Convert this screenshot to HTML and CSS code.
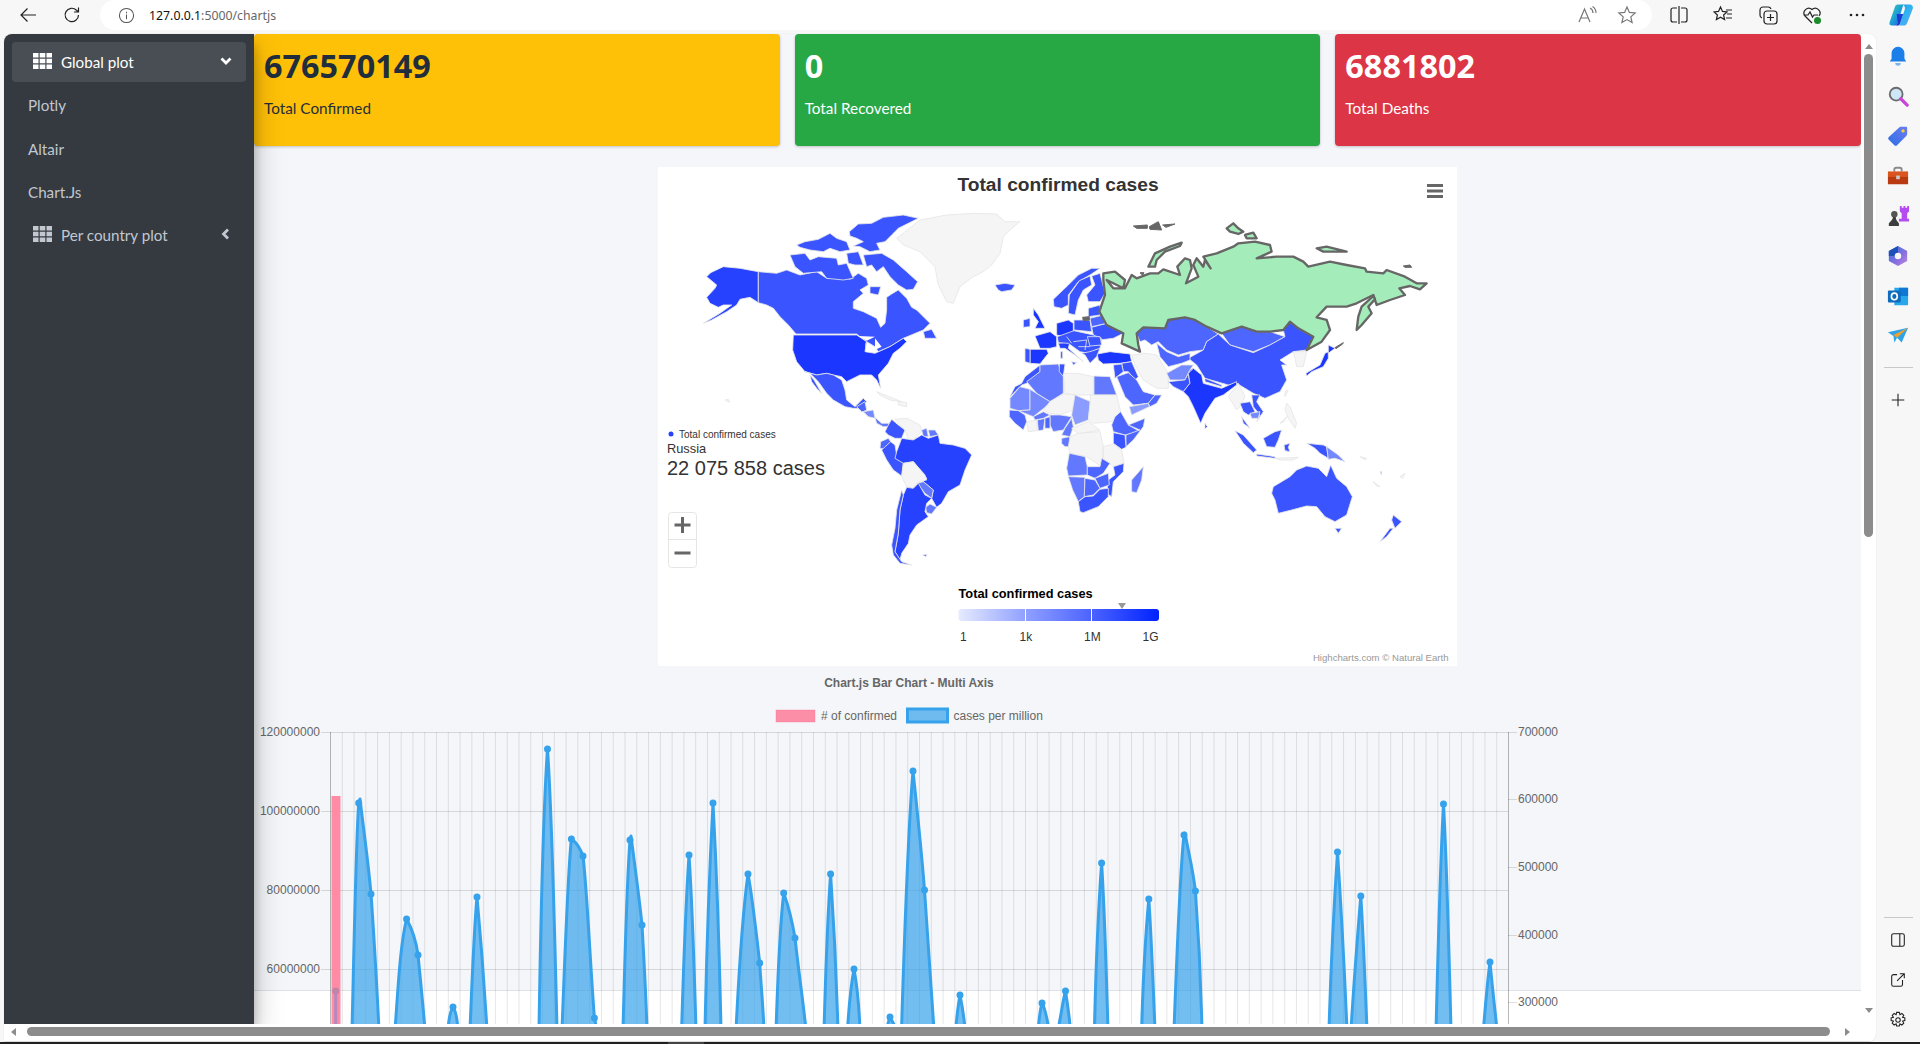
FILE: index.html
```html
<!DOCTYPE html>
<html lang="en">
<head>
  <meta charset="UTF-8" />
  <title>Chart.js - Covid dashboard</title>
  <link rel="stylesheet" href="styles.css">
</head>
<body>
  <header class="toolbar">
    <svg class="tool-icon back" viewBox="0 0 20 20"><path d="M18 10H3M9.500 3.500 3 10l6.500 6.500"/></svg>
    <svg class="tool-icon reload" viewBox="0 0 20 20"><path d="M16.500 10a6.700 6.700 0 1 1-2-4.800L16.500 7M16.500 2.500V7H12"/></svg>
    <div class="address">
      <svg class="info" viewBox="0 0 18 18"><circle cx="9" cy="9" r="7.500"/><path d="M9 8v5M9 5v1.500"/></svg>
      <span class="url"><b>127.0.0.1</b>:5000/chartjs</span>
      <svg class="tool-icon read" viewBox="0 0 20 20"><path d="M2 17 7.500 4 13 17M4 13h7M13 3c2 1 3 3 3 5M15.500 1.500c2.500 1.500 3.500 4 3.500 6.500"/></svg>
      <svg class="tool-icon star" viewBox="0 0 20 20"><path d="m10 2 2.400 5.400 5.800.6-4.400 3.900 1.300 5.700-5.100-3-5.100 3 1.300-5.700L1.800 8l5.800-.6z"/></svg>
    </div>
    <div class="toolbar-right">
      <svg class="tool-icon" viewBox="0 0 20 20"><path d="M10 1v18M8 3H4a2 2 0 0 0-2 2v10a2 2 0 0 0 2 2h4M12 3h4a2 2 0 0 1 2 2v10a2 2 0 0 1-2 2h-4"/></svg>
      <svg class="tool-icon" viewBox="0 0 20 20"><path d="m7.500 2 2 4.400 4.500.5-3.400 3.100 1 4.600-4.100-2.400L3.400 14.600l1-4.600L1 6.900l4.500-.5zM13 5h6M14 9h5M13 13h6"/></svg>
      <svg class="tool-icon" viewBox="0 0 20 20"><rect x="6" y="6" width="13" height="13" rx="3"/><path d="M12.500 9v7M9 12.500h7M4 13a3 3 0 0 1-2-3V5a3 3 0 0 1 3-3h5a3 3 0 0 1 3 2"/></svg>
      <svg class="tool-icon" viewBox="0 0 20 20"><path d="M10 18 3 11a4.800 4.800 0 0 1 7-6.500A4.800 4.800 0 0 1 17 11M1.500 10H6l2-3 2.500 5 1.500-2h4"/><circle class="health-dot" cx="15.500" cy="15.500" r="3.500"/></svg>
      <svg class="dots" viewBox="0 0 20 20"><circle cx="4" cy="10" r="1.300"/><circle cx="10" cy="10" r="1.300"/><circle cx="16" cy="10" r="1.300"/></svg>
      <svg class="copilot" viewBox="0 0 26 24">
        <defs>
          <linearGradient id="copA" x1="0" y1="0" x2="1" y2="1"><stop offset="0" stop-color="#3fd0a8"/><stop offset=".5" stop-color="#1c9fd8"/><stop offset="1" stop-color="#1a55e0"/></linearGradient>
          <linearGradient id="copB" x1="0" y1="0" x2="1" y2="1"><stop offset="0" stop-color="#1f8fe0"/><stop offset=".5" stop-color="#2fb4f0"/><stop offset="1" stop-color="#6fa0f5"/></linearGradient>
          <linearGradient id="copC" x1="0" y1="0" x2="0" y2="1"><stop offset="0" stop-color="#1c3fd6"/><stop offset="1" stop-color="#2a2fc0"/></linearGradient>
        </defs>
        <path fill="url(#copA)" d="M9 1h6L9 20c-1 2-2 3-4 3H3c-2 0-3-1.500-2.400-3.500L6 4c.600-2 1.500-3 3-3z"/>
        <path fill="url(#copC)" d="M8 11h7l-3 9c-.600 2-2 3-4 3H5c2 0 3-1 4-3z"/>
        <path fill="url(#copB)" d="M13 1h8c3 0 4.500 2 3.700 4.500L19 20c-.600 2-2 3-4 3H8c2 0 3-1 3.600-3l4.900-14c.500-3-1-5-3.500-5z"/>
      </svg>
    </div>
  </header>

  <div class="window">
    <div class="page">
      <div class="page-row">
        <div class="viewport">
          <aside class="sidebar">
            <nav class="nav">
              <a class="nav-item active">
                <svg class="th" viewBox="0 0 19 16"><path d="M0 0h5.500v4.500H0zM6.700 0h5.600v4.500H6.700zM13.500 0H19v4.500h-5.500zM0 5.700h5.500v4.600H0zM6.700 5.700h5.600v4.600H6.700zM13.500 5.700H19v4.600h-5.500zM0 11.500h5.500V16H0zM6.700 11.500h5.600V16H6.700zM13.500 11.500H19V16h-5.500z"/></svg>
                <span>Global plot</span>
                <svg class="chev" viewBox="0 0 12 12"><path d="m1.500 3.500 4.500 4.500 4.500-4.500"/></svg>
              </a>
              <a class="nav-item sub">Plotly</a>
              <a class="nav-item sub">Altair</a>
              <a class="nav-item sub">Chart.Js</a>
              <a class="nav-item">
                <svg class="th" viewBox="0 0 19 16"><path d="M0 0h5.500v4.500H0zM6.700 0h5.600v4.500H6.700zM13.500 0H19v4.500h-5.500zM0 5.700h5.500v4.600H0zM6.700 5.700h5.600v4.600H6.700zM13.500 5.700H19v4.600h-5.500zM0 11.500h5.500V16H0zM6.700 11.500h5.600V16H6.700zM13.500 11.500H19V16h-5.500z"/></svg>
                <span>Per country plot</span>
                <svg class="chev up" viewBox="0 0 12 12"><path d="M8 1.500 3.500 6 8 10.500"/></svg>
              </a>
            </nav>
          </aside>

          <main class="content">
            <section class="cards">
              <div class="card yellow"><h3>676570149</h3><p>Total Confirmed</p></div>
              <div class="card green"><h3>0</h3><p>Total Recovered</p></div>
              <div class="card red"><h3>6881802</h3><p>Total Deaths</p></div>
            </section>

            <section class="map-card">
              <svg class="map" viewBox="658 167 799 499">
                <text class="map-title" x="1058" y="190.500">Total confirmed cases</text>
                <path class="burger" d="M1427 185.500h16M1427 191h16M1427 196.500h16"/>

                <!-- north america -->
                <g class="tile" transform="translate(690 210) scale(.3333)">
                  <polygon class="c2" points="62,188 100,170 150,175 205,185 205,278 180,262 150,268 140,285 110,305 65,330 40,340 90,310 125,285 100,285 85,292 60,280 50,262 75,235 80,225 50,200"/>
                  <polygon class="c3" points="205,185 260,190 290,180 330,195 380,185 410,205 450,195 480,208 505,190 530,205 535,225 510,240 520,250 490,275 490,295 520,305 560,325 572,352 585,340 590,300 590,262 605,252 625,240 650,265 665,292 680,300 720,340 700,360 640,385 600,410 565,425 555,410 530,395 500,372 318,372 295,345 270,320 250,295 230,285 205,278"/>
                  <polygon class="c3" points="520,135 575,130 610,150 650,185 683,215 670,238 650,240 625,225 600,200 580,170 560,185 545,165 530,170"/>
                  <polygon class="c3" points="478,65 505,42 545,40 580,22 640,15 685,25 655,40 625,55 605,75 585,95 560,100 570,120 540,125 510,110 490,108 520,95 500,85 480,78"/>
                  <polygon class="c3" points="300,135 345,130 360,150 385,140 440,145 445,165 470,160 490,205 460,210 410,205 395,185 340,190 315,170"/>
                  <polygon class="c3" points="320,105 345,95 385,88 420,70 440,85 470,95 480,120 450,125 420,115 400,125 360,120 330,112"/>
                  <polygon class="c3" points="470,130 505,125 520,165 495,165 475,160"/>
                  <polygon class="c3" points="540,230 572,230 565,255 540,250"/>
                  <polygon class="c3" points="700,365 725,358 740,385 705,385"/>
                  <polygon class="c1" points="310,375 500,375 530,395 525,425 555,430 600,410 640,385 650,395 630,415 610,430 595,460 565,495 572,535 560,510 545,495 510,495 470,515 455,500 430,495 410,490 380,495 345,485 320,455 308,420"/>
                  <polygon class="lake" points="505,378 555,380 530,392"/>
                  <polygon class="lake" points="526,395 536,425 528,425"/>
                  <polygon class="lake" points="555,385 575,410 555,420"/>
                  <polygon class="c3" points="345,485 380,495 410,490 430,495 455,510 465,540 470,570 495,590 520,565 530,575 510,595 490,595 465,590 430,570 410,550 385,515 360,490"/>
                  <polygon class="c3" points="360,495 372,510 395,550 380,535 365,515"/>
                  <polygon class="c4" points="500,590 525,575 530,600 520,605 515,605"/>
                  <polygon class="c6" points="520,605 550,600 555,625 535,620"/>
                  <polygon class="c5" points="555,622 575,640 595,640 600,650 580,650 560,640"/>
                  <polygon class="grey" points="560,545 610,565 635,575 600,570 570,555"/>
                  <polygon class="grey" points="625,575 650,578 650,590 625,585"/>
                  <polygon class="grey" points="620,85 690,30 770,15 850,10 920,12 945,35 990,35 960,60 940,80 930,130 905,165 880,185 850,200 810,230 790,280 770,275 745,225 735,170 690,125 640,105"/>
                  <polygon class="c3" points="915,225 945,220 975,225 965,240 935,245 925,240"/>
                  <polygon class="grey" points="105,570 115,568 120,577 110,573"/>
                </g>

                <!-- south america -->
                <g class="tile" transform="translate(860 400) scale(.3333)">
                  <polygon class="c3" points="95,58 115,75 135,90 125,115 105,115 85,105 75,95 85,75"/>
                  <polygon class="grey" points="105,58 140,55 180,75 185,95 160,120 145,118 135,90"/>
                  <polygon class="c5" points="185,90 200,85 205,110 190,110"/>
                  <polygon class="c5" points="205,90 225,90 235,105 210,110"/>
                  <polygon class="c4" points="62,125 85,115 92,125 75,148 60,145"/>
                  <polygon class="c3" points="65,150 92,125 105,135 110,165 130,190 125,228 100,210 80,180"/>
                  <polygon class="c2" points="125,115 160,120 185,105 205,115 235,105 240,130 280,135 315,145 335,165 315,210 300,255 265,275 245,310 230,322 215,295 220,270 190,245 200,235 160,185 130,190 105,175 110,155"/>
                  <polygon class="grey" points="130,190 160,185 195,225 200,240 175,245 160,265 140,260 125,230"/>
                  <polygon class="c5" points="172,250 190,245 220,270 215,295 195,280"/>
                  <polygon class="c5" points="197,322 210,312 230,322 215,342 200,338"/>
                  <polygon class="c2" points="140,262 160,265 175,250 195,285 215,295 200,310 195,335 205,350 170,375 150,405 145,430 125,460 120,480 105,455 115,400 120,330 130,285"/>
                  <polygon class="c3" points="125,270 130,285 120,330 115,400 105,455 125,485 155,495 120,490 100,465 95,435 105,385 110,330"/>
                  <polygon class="c3" points="188,465 200,463 198,470"/>
                </g>

                <!-- europe, africa, middle east -->
                <g class="tile" transform="translate(1000 240) scale(.3333)">
                  <polygon class="c3" points="160,178 205,135 235,105 275,85 300,85 270,105 235,125 205,165 205,195 185,205 162,200"/>
                  <polygon class="c3" points="208,165 238,122 270,108 275,135 250,150 235,180 225,225 205,220"/>
                  <polygon class="c3" points="275,108 300,100 315,160 300,185 265,185 260,165 285,135"/>
                  <polygon class="c1" points="170,250 205,240 220,250 220,285 195,290 170,285"/>
                  <polygon class="c1" points="105,288 150,275 170,290 170,320 150,325 120,325"/>
                  <polygon class="c1" points="90,328 140,328 145,340 120,372 90,370"/>
                  <polygon class="c3" points="75,325 90,328 90,370 75,365"/>
                  <polygon class="c1" points="100,205 115,225 135,265 105,265 115,245 100,225"/>
                  <polygon class="c3" points="70,240 90,235 90,260 70,262"/>
                  <polygon class="c2" points="175,310 210,305 205,325 250,365 225,345 195,325 180,325"/>
                  <polygon class="c3" points="215,365 230,368 220,375"/>
                  <polygon class="c3" points="182,335 188,335 188,355 182,355"/>
                  <polygon class="c3" points="222,240 270,240 275,275 222,270"/>
                  <polygon class="c3" points="275,262 320,250 370,280 340,295 300,300 280,285"/>
                  <polygon class="c4" points="270,235 310,225 320,250 275,260"/>
                  <polygon class="c3" points="265,205 300,195 300,225 265,230"/>
                  <polygon class="russia-bit" points="248,232 268,230 268,240 250,242"/>
                  <polygon class="c3" points="172,290 222,272 280,285 305,295 300,325 265,340 240,335 205,310 175,308"/>
                  <polygon class="c3" points="262,290 300,290 305,315 270,318"/>
                  <polygon class="c3" points="245,340 270,335 300,325 290,350 270,370 255,345"/>
                  <polyline class="border" points="200,290 215,310"/>
                  <polyline class="border" points="220,305 260,300 255,330"/>
                  <polyline class="border" points="235,320 270,320"/>
                  <polygon class="c1" points="292,342 330,335 390,342 395,365 360,370 310,372 295,360"/>
                  <polygon class="c3" points="365,370 395,365 415,410 405,420 385,395 370,395"/>
                  <polygon class="c3" points="340,375 365,372 370,395 345,415"/>
                  <polygon class="grey" points="395,345 440,340 470,345 505,400 505,445 470,445 430,420 405,375"/>
                  <polygon class="c4" points="350,410 385,398 410,420 430,455 465,465 445,490 400,495 375,470"/>
                  <polygon class="c7" points="388,500 445,490 448,500 395,525"/>
                  <polygon class="c4" points="445,490 465,465 485,465 470,490 450,500"/>
                  <!-- africa -->
                  <polygon class="c3" points="75,410 120,375 120,395 80,430 65,435 50,450 30,470 45,440 65,430"/>
                  <polygon class="c5" points="120,375 175,372 190,410 190,460 150,485 110,460 80,425 120,395"/>
                  <polygon class="c3" points="178,372 195,372 190,410 178,395"/>
                  <polygon class="grey" points="190,400 235,400 280,410 280,465 225,465 195,460"/>
                  <polygon class="c5" points="282,408 330,410 350,465 282,465"/>
                  <polygon class="c6" points="30,475 60,440 90,448 90,510 55,512 30,505"/>
                  <polygon class="c6" points="90,448 150,485 150,490 125,510 100,530 55,512 90,510"/>
                  <polygon class="grey" points="150,485 190,462 225,465 220,510 180,525 150,520 130,510"/>
                  <polygon class="c7" points="225,465 272,485 265,540 225,555 215,525"/>
                  <polygon class="grey" points="272,465 350,465 362,515 335,545 280,550 265,540"/>
                  <polygon class="c5" points="150,525 180,525 215,530 190,570 160,575 150,555"/>
                  <polygon class="c5" points="195,565 215,535 220,560 210,590 185,585"/>
                  <polygon class="c5" points="112,540 135,535 130,570 115,572"/>
                  <polygon class="c4" points="135,535 150,530 150,565 135,565"/>
                  <polygon class="grey" points="80,545 110,540 112,572 85,575"/>
                  <polygon class="c4" points="28,510 55,512 75,525 80,545 70,570 45,550 28,530"/>
                  <polygon class="c5" points="100,530 130,515 150,525 130,535 105,540"/>
                  <polygon class="c5" points="185,595 210,590 210,620 195,620 185,610"/>
                  <polygon class="grey" points="215,565 265,545 300,570 235,582"/>
                  <polygon class="grey" points="210,590 235,580 300,575 310,620 305,680 260,650 210,640 205,620"/>
                  <polygon class="c4" points="345,530 362,515 385,555 420,575 375,585 340,575 335,555"/>
                  <polygon class="c4" points="385,555 435,535 430,560 400,600 378,620 378,585 420,570"/>
                  <polygon class="c3" points="340,578 375,585 378,622 365,628 340,610"/>
                  <polygon class="grey" points="310,620 340,612 365,630 372,670 340,680 310,655"/>
                  <polygon class="c5" points="208,640 255,650 262,680 262,705 205,708 200,685"/>
                  <polygon class="c4" points="262,680 300,680 305,655 330,670 310,700 285,715 262,705"/>
                  <polygon class="c3" points="340,680 372,670 370,695 340,725 335,770 320,760 325,720 345,705"/>
                  <polygon class="c5" points="205,710 255,712 253,770 235,785 218,750"/>
                  <polygon class="c4" points="255,715 285,720 300,745 280,765 253,770"/>
                  <polygon class="c4" points="285,715 325,700 328,735 300,745"/>
                  <polygon class="c3" points="235,785 255,770 280,768 300,748 325,745 325,770 295,800 250,818 240,815"/>
                  <polygon class="c5" points="430,680 425,720 410,758 395,755 395,720"/>
                </g>

                <!-- asia -->
                <g class="tile" transform="translate(1090 210) scale(.3333)">
                  <polygon class="c4" points="140,370 160,352 225,355 235,330 285,322 315,330 350,350 385,372 350,395 340,420 300,425 265,435 230,420 205,395 195,400 185,405 165,390 150,395"/>
                  <polygon class="c4" points="395,370 455,350 500,365 540,365 585,380 540,405 490,425 420,405"/>
                  <polygon class="c3" points="385,372 420,405 490,428 540,405 585,380 580,360 600,335 625,355 670,380 650,420 610,425 570,450 590,465 575,465 590,510 570,545 525,565 490,550 440,520 415,525 345,505 320,465 295,445 340,420 350,395"/>
                  <polygon class="c4" points="200,400 230,425 265,440 300,430 300,450 275,460 235,470 210,440"/>
                  <polygon class="c6" points="230,490 275,465 310,465 300,480 285,510 240,510"/>
                  <polygon class="c3" points="235,515 285,510 300,480 310,475 295,495 300,520 280,545 250,530"/>
                  <polygon class="c1" points="310,475 335,495 340,520 395,535 440,515 440,525 400,555 375,565 345,610 332,640 310,590 295,560 280,545 300,520 295,490"/>
                  <polygon class="c3" points="345,505 395,525 395,530 345,515"/>
                  <polygon class="c2" points="345,640 352,650 345,657"/>
                  <polygon class="grey" points="610,425 650,425 640,470 620,470 615,445"/>
                  <polygon class="c1" points="648,490 690,465 705,430 715,425 715,445 700,470 665,485 650,498"/>
                  <polygon class="c1" points="715,405 735,415 715,430"/>
                  <polygon class="ru" points="40,190 75,185 105,210 100,235 70,220 50,210 70,235 105,235 125,195 140,205 180,190 205,190 220,178 270,195 262,170 285,145 300,150 305,175 288,220 325,200 310,165 320,145 340,170 345,150 362,175 340,140 380,130 430,110 445,100 495,95 540,105 545,125 500,145 560,140 610,140 640,155 655,170 720,155 770,165 825,175 830,185 880,190 890,180 945,200 980,220 1010,220 990,238 960,228 928,235 945,255 900,270 860,285 850,255 800,280 770,290 710,290 680,322 710,330 720,360 695,395 650,420 670,380 625,355 600,335 580,360 540,365 500,365 455,350 395,370 350,350 315,330 285,322 235,330 225,355 160,352 140,370 145,405 150,425 95,400 100,370 50,345 28,305 45,255 40,210"/>
                  <polygon class="ru" points="800,360 805,320 815,290 850,258 855,268 835,290 845,310 815,345"/>
                  <polygon class="ru" points="175,170 195,130 240,110 275,98 270,108 225,125 200,150 195,170"/>
                  <polygon class="ru" points="410,55 430,40 445,55 460,65 445,72 420,65"/>
                  <polygon class="ru" points="465,75 490,68 500,85 470,85"/>
                  <polygon class="ru" points="680,115 710,110 770,125 730,125 700,125"/>
                  <polygon class="ru-dark" points="130,48 172,45 172,55 140,55"/>
                  <polygon class="ru-dark" points="178,50 205,35 215,60 180,58"/>
                  <polygon class="ru-dark" points="218,45 255,42 228,52"/>
                  <polygon class="ru-dark" points="940,168 960,165 965,172 945,172"/>
                  <polygon class="ru-dark" points="150,188 162,188 158,196"/>
                  <polygon class="ru-dark" points="735,413 760,398 758,402 738,416"/>
                </g>

                <!-- south east asia, oceania -->
                <g class="tile" transform="translate(1160 360) scale(.3333)">
                  <polygon class="grey" points="205,110 235,70 255,110 240,140 230,150 215,125"/>
                  <polygon class="c3" points="240,130 270,125 285,155 265,165 250,155"/>
                  <polygon class="c3" points="245,170 270,205 250,190"/>
                  <polygon class="c3" points="275,105 300,105 290,125 310,155 290,185 300,165 280,140"/>
                  <polygon class="c6" points="270,160 300,155 295,175 275,175"/>
                  <polygon class="grey" points="375,95 385,90 375,110"/>
                  <polygon class="grey" points="380,130 390,140 410,190 405,205 385,175 375,150"/>
                  <polygon class="grey" points="360,190 380,170 372,185"/>
                  <polygon class="c3" points="225,212 250,225 290,270 280,278 250,250"/>
                  <polygon class="c3" points="290,282 345,290 345,295 290,288"/>
                  <polygon class="grey" points="345,295 415,292 400,300 360,300"/>
                  <polygon class="c3" points="310,235 345,215 365,210 355,240 345,262 320,260"/>
                  <polygon class="c3" points="372,255 390,250 385,262 390,275 375,272"/>
                  <polygon class="c3" points="440,250 490,255 500,260 505,295 480,280 465,265"/>
                  <polygon class="c6" points="500,260 535,285 555,305 525,295 505,298"/>
                  <polygon class="c3" points="340,380 390,350 410,330 440,318 475,325 500,350 512,315 530,355 560,380 577,410 560,465 525,485 495,470 470,440 440,438 395,450 355,460 345,420 335,400"/>
                  <polygon class="c3" points="525,505 545,505 535,520"/>
                  <polygon class="c3" points="700,465 725,485 705,505 695,480"/>
                  <polygon class="c3" points="700,505 680,530 660,545 690,505"/>
                  <polygon class="grey" points="600,290 620,295 615,300"/>
                  <polygon class="grey" points="640,365 660,380 650,378"/>
                  <polygon class="grey" points="720,350 735,340 728,355"/>
                  <polygon class="c4" points="660,335 665,335 665,345"/>
                </g>

                <circle class="tip-dot" cx="671" cy="434" r="2.500"/>
                <text class="tip-series" x="679" y="437.500">Total confirmed cases</text>
                <text class="tip-name" x="667" y="453">Russia</text>
                <text class="tip-value" x="667" y="475">22 075 858 cases</text>

                <rect class="zoom-box" x="668.500" y="512.500" width="28" height="55" rx="3"/>
                <path class="zoom-line" d="M668.500 539.500h28"/>
                <path class="zoom-sign" d="M674.500 525h16M682.500 517v16M674.500 553h16"/>

                <text class="legend-title" x="958.500" y="597.500">Total confirmed cases</text>
                <path class="legend-marker" d="m1118 603 h8 l-4 6z"/>
                <defs>
                  <linearGradient id="scale"><stop offset="0" stop-color="#e6ebff"/><stop offset=".34" stop-color="#8f9fff"/><stop offset=".67" stop-color="#4a62ff"/><stop offset="1" stop-color="#0022ff"/></linearGradient>
                </defs>
                <rect x="958.500" y="609" width="200.500" height="12" rx="3" fill="url(#scale)"/>
                <path class="legend-tick" d="M1025.500 609v12M1091.500 609v12"/>
                <text class="legend-label" x="960" y="641">1</text>
                <text class="legend-label" x="1019.500" y="641">1k</text>
                <text class="legend-label" x="1084" y="641">1M</text>
                <text class="legend-label" x="1142.500" y="641">1G</text>
                <text class="credits" x="1448.500" y="661">Highcharts.com © Natural Earth</text>
              </svg>
            </section>

            <svg class="bar-chart" viewBox="254 666 1606 358">
              <text class="chart-title" x="909" y="687">Chart.js Bar Chart - Multi Axis</text>
              <rect class="key-pink" x="776" y="710" width="39" height="12"/>
              <text class="chart-label" x="821" y="720">&#35; of confirmed</text>
              <rect class="key-blue" x="907.500" y="709" width="40" height="13"/>
              <text class="chart-label" x="953.500" y="720">cases per million</text>

              <path class="grid" d="M321 732.500H1508M321 811.500H1508M321 890.500H1508M321 969.500H1508M1508 732.500h9M1508 799.500h9M1508 867.500h9M1508 935.500h9M1508 1002.500h9"/>
              <line class="grid-v" x1="341.780" y1="878" x2="1508" y2="878"/>
              <path class="axis" d="M330.500 732v292M1508.500 732v292"/>

              <text class="tick" x="320" y="736">120000000</text>
              <text class="tick" x="320" y="815">100000000</text>
              <text class="tick" x="320" y="894">80000000</text>
              <text class="tick" x="320" y="973">60000000</text>
              <text class="tick-right" x="1518" y="736">700000</text>
              <text class="tick-right" x="1518" y="803">600000</text>
              <text class="tick-right" x="1518" y="871">500000</text>
              <text class="tick-right" x="1518" y="939">400000</text>
              <text class="tick-right" x="1518" y="1006">300000</text>

              <rect class="bar" x="331.500" y="796" width="9" height="228"/>
              <path class="bar-line" d="M335.700 991V1024"/>
              <path class="area" d="M352 1030C354 950 356 840 358.700 803L360 799C363 825 368 860 371 894C375 950 377 990 379 1030Z
                M395 1030C398 990 400 945 406.600 919C411 927 416 940 418 955C421 985 423 1005 425 1030Z
                M448 1030C449 1015 451 1010 453 1007C455 1010 457 1015 458 1030Z
                M470 1030C472 980 474 930 477 897C480 930 484 980 487 1030Z
                M539 1030C541 900 544 800 547.500 749C551 800 554 900 557 1030Z
                M562 1030C565 950 568 870 571.400 839C576 842 580 848 583 856C587 890 590 960 594.400 1018L597 1030Z
                M623 1030C625 950 627 880 630 840L631 836C634 860 639 895 642 925C644 960 646 995 647 1030Z
                M681.600 1030C684 950 686 900 689 855C692 900 694 960 696 1030Z
                M705 1030C707 930 710 860 713 803C716 860 719 930 721 1030Z
                M736 1030C739 970 743 910 748 874C752 895 756 930 759.700 963C761 985 763 1005 764 1030Z
                M776 1030C778 970 780 925 783.700 893C788 905 792 920 795 938C799 975 803 1000 806 1030Z
                M824 1030C826 960 828 910 830.600 874C833 910 836 960 838 1030Z
                M847.500 1030C849 1005 851 985 854 969C857 985 859 1005 860 1030Z
                M886 1030L890 1017L897 1030Z
                M901.500 1030C904 950 908 830 913 771C916 800 921 845 924.500 890C928 940 931 985 934 1030Z
                M955.600 1030C957 1015 958 1005 960 995C962 1005 964 1015 965 1030Z
                M1038 1030C1039 1020 1040 1010 1042 1003C1045 1008 1047 1018 1049 1030Z
                M1058 1030C1061 1015 1063 1000 1065.500 991C1067 1000 1069 1015 1070.500 1030Z
                M1094.400 1030C1096 960 1099 900 1101.600 863C1104 900 1106 960 1108 1030Z
                M1141.600 1030C1143 980 1146 930 1148.800 899C1151 930 1153 980 1155 1030Z
                M1174 1030C1177 950 1180 870 1184 835L1185 833C1189 855 1193 870 1195.400 891C1199 940 1201 985 1202 1030Z
                M1329 1030C1331 960 1335 890 1337.500 852C1340 890 1344 960 1347 1030Z
                M1351 1030C1354 980 1358 930 1360.800 896C1363 930 1365 980 1367 1030Z
                M1436 1030C1438 950 1441 850 1443.500 804C1446 850 1449 950 1451 1030Z
                M1483.400 1030C1485 1010 1487 985 1490 962C1492 985 1495 1010 1497 1030Z"/>
              <path class="points" d="M358.700 803h0M371 894h0M406.600 919h0M418 955h0M453 1007h0M477 897h0M547.500 749h0M571.400 839h0M583 856h0M594.400 1018h0M630 840h0M642 925h0M689 855h0M713 803h0M748 874h0M759.700 963h0M783.700 893h0M795 938h0M830.600 874h0M854 969h0M890 1017h0M913 771h0M924.500 890h0M960 995h0M1042 1003h0M1065.500 991h0M1101.600 863h0M1148.800 899h0M1184 835h0M1195.400 891h0M1337.500 852h0M1360.800 896h0M1443.500 804h0M1490 962h0"/>
              <path class="points faded" d="M335.700 991h0"/>
            </svg>
          </main>
        </div>

        <div class="vscroll">
          <span class="arrow-up"></span>
          <div class="vthumb"></div>
          <span class="arrow-down"></span>
        </div>
      </div>

      <div class="hscroll">
        <span class="arrow-left"></span>
        <div class="hthumb"></div>
        <span class="arrow-right"></span>
      </div>
    </div>

    <aside class="edge-bar">
      <div class="edge-item"><svg viewBox="0 0 24 24"><path fill="#1a7fe8" d="M12 2a7 7 0 0 0-7 7v6l-2 3h18l-2-3V9a7 7 0 0 0-7-7z"/><path fill="#7fb2e8" d="M9 19.500h6a3 3 0 0 1-6 0z"/></svg></div>
      <div class="edge-item"><svg viewBox="0 0 24 24"><circle cx="10" cy="10" r="7" fill="#cfe6f7" stroke="#6b6b6b" stroke-width="2"/><path d="m15 15 7 7" stroke="#c944d8" stroke-width="3.500" stroke-linecap="round"/></svg></div>
      <div class="edge-item"><svg viewBox="0 0 24 24"><defs><linearGradient id="tagFill" x1="0" y1="1" x2="1" y2="0"><stop offset="0" stop-color="#2f6fe4"/><stop offset="1" stop-color="#6a7df2"/></linearGradient></defs><path fill="url(#tagFill)" d="M2 13 13 3c1-1 2-1 3-1h5a1 1 0 0 1 1 1v6c0 1 0 2-1 3L11 22c-1 1-2 1-3 0l-6-6c-1-1-1-2 0-3z"/><circle cx="17.500" cy="6.500" r="1.800" fill="#f4d13d"/></svg></div>
      <div class="edge-item"><svg viewBox="0 0 24 24"><path d="M8 7V5a2 2 0 0 1 2-2h4a2 2 0 0 1 2 2v2" fill="none" stroke="#8a8a8a" stroke-width="2"/><rect x="1" y="7" width="22" height="7" fill="#d9541e"/><rect x="1" y="13" width="22" height="8" fill="#b93a10"/><rect x="10" y="11.500" width="4" height="4" fill="#c9c9c9"/></svg></div>
      <div class="edge-item"><svg viewBox="0 0 24 24"><path fill="#b44cf0" d="M14 1h2v2h2V1h2v2h2V1h2v6l-2 2v6h2v3H13v-3h3V9l-2-2z"/><circle cx="8" cy="10" r="3.500" fill="#555"/><path fill="#3d3d3d" d="M6.500 13h3c0 3 2 5 3.500 7v3H2v-3c1.500-2 4.500-4 4.500-7z"/></svg></div>
      <div class="edge-item"><svg viewBox="0 0 24 24"><defs><linearGradient id="hexFill" x1="0" y1="0" x2="1" y2="1"><stop offset="0" stop-color="#2b74e0"/><stop offset=".6" stop-color="#8a6fe0"/><stop offset="1" stop-color="#c08ae0"/></linearGradient></defs><path fill="url(#hexFill)" d="M12 1 22 6.500v11L12 23 2 17.500v-11z"/><path fill="#1f4fb8" d="M12 1v8l-5 3H2V6.500z"/><circle cx="12" cy="12" r="3.500" fill="#f7f7f7"/></svg></div>
      <div class="edge-item"><svg viewBox="0 0 24 24"><path fill="#28a8ea" d="M8 3h14a1 1 0 0 1 1 1v17a1 1 0 0 1-1 1H8z"/><path fill="#0f78d4" d="M13 3h10v9H13z"/><rect x="1" y="6" width="14" height="13" rx="1" fill="#0f6cbd"/><ellipse cx="8" cy="12.500" rx="3.200" ry="3.600" fill="none" stroke="#fff" stroke-width="1.800"/></svg></div>
      <div class="edge-item"><svg viewBox="0 0 24 24"><path fill="#2ea3e8" d="M1 8 23 3 16 19l-5-5-3 5-1-7z"/><path fill="#f0a02c" d="M7 11 23 3 11 14z"/></svg></div>
      <hr class="edge-rule">
      <div class="edge-item line"><svg viewBox="0 0 20 20"><path d="M10 3v14M3 10h14"/></svg></div>
      <div class="edge-bottom">
        <hr class="edge-rule tight">
        <div class="edge-item line"><svg viewBox="0 0 20 20"><rect x="3" y="3" width="14" height="14" rx="2"/><path d="M12 3v14"/></svg></div>
        <div class="edge-item line"><svg viewBox="0 0 20 20"><path d="M9 4H5a2 2 0 0 0-2 2v9a2 2 0 0 0 2 2h8a2 2 0 0 0 2-2v-5M9 11l8-8M12 3h5v5"/></svg></div>
        <div class="edge-item line"><svg viewBox="0 0 20 20"><circle cx="10" cy="10" r="2.500"/><path d="m8.500 1.500 3 0 .6 2.500 2.200-1.300 2.100 2.100-1.300 2.200 2.500.6v3l-2.500.6 1.300 2.200-2.100 2.100-2.200-1.300-.6 2.500h-3l-.6-2.500-2.200 1.300-2.100-2.100 1.300-2.200-2.500-.6v-3l2.500-.6-1.300-2.200 2.100-2.100 2.200 1.300z"/></svg></div>
      </div>
    </aside>
  </div>

  <div class="taskbar"><span class="task-active"></span></div>
</body>
</html>
```
FILE: styles.css
```css
html, body {
  margin: 0;
  padding: 0;
  height: 100%;
  overflow: hidden;
  background-color: #f7f7f7;
  font-family: 'Lato', 'Noto Sans', sans-serif;
}
svg {
  display: block;
}

/* browser bar */
.toolbar {
  display: flex;
  align-items: center;
  height: 34px;
  box-sizing: border-box;
  padding: 0 14px 4px 18px;
}
.tool-icon {
  width: 20px;
  height: 20px;
  flex: none;
  fill: none;
  stroke: #222;
  stroke-width: 1.200;
}
.back {
  margin-right: 24px;
}
.reload {
  margin-right: 18px;
}
.address {
  display: flex;
  align-items: center;
  flex: none;
  width: 1552px;
  height: 30px;
  box-sizing: border-box;
  padding: 0 15px 0 18px;
  background: #fff;
  border-radius: 15px;
}
.info {
  width: 17px;
  height: 17px;
  fill: none;
  stroke: #555;
  stroke-width: 1.100;
  margin-right: 14px;
}
.url {
  flex: 1;
  font-family: 'Noto Sans', sans-serif;
  font-size: 12.300px;
  color: #666;
}
.url b {
  font-weight: 400;
  color: #111;
}
.read {
  stroke: #777;
  margin-right: 20px;
}
.star {
  stroke: #777;
}
.toolbar-right {
  display: flex;
  align-items: center;
  margin-left: 17px;
  gap: 24.400px;
}
.health-dot {
  fill: #1b8a2a;
  stroke: none;
}
.dots {
  width: 20px;
  height: 20px;
  fill: #222;
}
.copilot {
  width: 25px;
  height: 24px;
  margin-left: -2px;
}

/* page frame */
.window {
  display: flex;
  height: 1008px;
}
.page {
  display: flex;
  flex-direction: column;
  flex: none;
  width: 1872px;
  margin-left: 4px;
  background: #fff;
  border-radius: 8px 8px 8px 0;
  box-shadow: 0 0 1px rgba(0,0,0,0.2);
  overflow: hidden;
}
.page-row {
  display: flex;
  height: 990px;
}
.viewport {
  display: flex;
  width: 1857px;
  overflow: hidden;
}

/* left menu */
.sidebar {
  position: relative;
  z-index: 1;
  flex: none;
  width: 250px;
  background: #343a40;
  box-shadow: 0 14px 28px rgba(0,0,0,0.25), 0 10px 10px rgba(0,0,0,0.22);
}
.nav {
  display: flex;
  flex-direction: column;
  gap: 3.300px;
  padding: 8px 8px 0;
}
.nav-item {
  display: flex;
  align-items: center;
  height: 40px;
  padding: 0 14px 0 21px;
  color: #c2c7d0;
  font-size: 15.200px;
  border-radius: 4px;
}
.nav-item.sub {
  padding-left: 16px;
}
.nav-item.active {
  background: rgba(255,255,255,0.1);
  color: #fff;
}
.nav-item span {
  flex: 1;
  margin-left: 9px;
}
.th {
  width: 19px;
  height: 16px;
  fill: currentColor;
  margin-top: -2px;
}
.chev {
  width: 12px;
  height: 12px;
  fill: none;
  stroke: currentColor;
  stroke-width: 2.800;
  margin-top: -3px;
}

/* content */
.content {
  flex: none;
  width: 1607px;
  height: 990px;
  overflow: hidden;
  background: linear-gradient(#f4f6f9 956px, #dee2e6 956px, #dee2e6 957px, #fff 957px);
}
.cards {
  display: grid;
  grid-template-columns: repeat(3, 1fr);
  gap: 15px;
  width: 1607px;
}
.card {
  height: 112px;
  box-sizing: border-box;
  padding: 9px 10px;
  border-radius: 4px;
  box-shadow: 0 0 1px rgba(0,0,0,0.125), 0 1px 3px rgba(0,0,0,0.2);
  color: #fff;
}
.card h3 {
  margin: 0;
  font-family: 'Noto Sans', sans-serif;
  font-size: 32.400px;
  font-weight: 700;
  line-height: 44px;
}
.card p {
  margin: 11px 0 0;
  font-size: 15.300px;
  line-height: 20px;
}
.yellow {
  background: #ffc107;
  color: #1f2d3d;
}
.green {
  background: #28a745;
}
.red {
  background: #dc3545;
}

/* map */
.map-card {
  width: 799px;
  height: 499px;
  margin: 21px 0 0 404px;
  background: #fff;
}
.map {
  width: 799px;
  height: 499px;
  font-family: 'Liberation Sans', sans-serif;
}
.map-title {
  font-size: 19.200px;
  font-weight: 700;
  fill: #333;
  text-anchor: middle;
}
.burger {
  fill: none;
  stroke: #666;
  stroke-width: 3;
}
.tile polygon {
  stroke: #e6e6e6;
  stroke-width: 2.500;
  stroke-linejoin: round;
}
.c1 { fill: #1a36ff; }
.c2 { fill: #2742ff; }
.c3 { fill: #3a55ff; }
.c4 { fill: #4d66ff; }
.c5 { fill: #6279ff; }
.c6 { fill: #7489ff; }
.c7 { fill: #8a9cff; }
.grey { fill: #f5f5f5; }
.tile .lake {
  fill: #fff;
  stroke: none;
}
.tile .border {
  fill: none;
  stroke: #e6e6e6;
  stroke-width: 2.500;
}
.tile .ru {
  fill: #a4edba;
  stroke: #666;
  stroke-width: 7;
}
.tile .ru-dark,
.tile .russia-bit {
  fill: #666;
  stroke: #666;
  stroke-width: 3;
}
.tip-dot {
  fill: #2742ff;
}
.tip-series {
  font-size: 10px;
  fill: #333;
}
.tip-name {
  font-size: 12.800px;
  fill: #333;
}
.tip-value {
  font-size: 20px;
  fill: #333;
}
.zoom-box {
  fill: #fff;
  stroke: #e6e6e6;
}
.zoom-line {
  stroke: #e6e6e6;
  fill: none;
}
.zoom-sign {
  stroke: #666;
  stroke-width: 3;
  fill: none;
}
.legend-title {
  font-size: 12.800px;
  font-weight: 700;
  fill: #000;
}
.legend-marker {
  fill: #999;
}
.legend-tick {
  stroke: #fff;
  fill: none;
}
.legend-label {
  font-size: 12px;
  fill: #333;
}
.credits {
  font-size: 9.600px;
  fill: #999;
  text-anchor: end;
}

/* chart.js part */
.bar-chart {
  width: 1606px;
  height: 358px;
  font-family: 'Liberation Sans', sans-serif;
}
.chart-title {
  font-size: 12px;
  font-weight: 700;
  fill: #666;
  text-anchor: middle;
}
.chart-label,
.tick,
.tick-right {
  font-size: 12px;
  fill: #666;
}
.tick {
  text-anchor: end;
}
.key-pink {
  fill: rgba(255,99,132,0.7);
  stroke: rgba(255,99,132,0.3);
}
.key-blue {
  fill: rgba(54,162,235,0.7);
  stroke: #36a2eb;
  stroke-width: 3;
}
.grid {
  fill: none;
  stroke: rgba(0,0,0,0.13);
}
.grid-v {
  stroke: rgba(0,0,0,0.1);
  stroke-width: 292;
  stroke-dasharray: 1 10.780;
}
.axis {
  fill: none;
  stroke: rgba(0,0,0,0.28);
}
.bar {
  fill: #ff8ba5;
}
.bar-line {
  stroke: #b18abf;
  stroke-width: 3;
}
.area {
  fill: rgba(54,162,235,0.7);
  stroke: #36a2eb;
  stroke-width: 3;
  stroke-linejoin: round;
}
.points {
  fill: none;
  stroke: #36a2eb;
  stroke-width: 7;
  stroke-linecap: round;
}
.points.faded {
  stroke: #c084a8;
}

/* scrollbars */
.vscroll {
  display: flex;
  flex-direction: column;
  align-items: center;
  flex: none;
  width: 15px;
  background: #fff;
}
.vthumb {
  width: 9px;
  height: 483px;
  margin-top: 5px;
  background: #8c8c8c;
  border-radius: 5px;
}
.arrow-up {
  width: 0;
  height: 0;
  margin-top: 10px;
  border: 4px solid transparent;
  border-top: 0;
  border-bottom: 5px solid #8c8c8c;
}
.arrow-down {
  width: 0;
  height: 0;
  margin-top: auto;
  margin-bottom: 11px;
  border: 4px solid transparent;
  border-bottom: 0;
  border-top: 5px solid #8c8c8c;
}
.hscroll {
  display: flex;
  align-items: center;
  height: 18px;
  padding: 0 0 2px 7px;
  border-bottom: 1px solid #dcdcdc;
  box-sizing: border-box;
}
.hthumb {
  width: 1803px;
  height: 9px;
  margin-left: 11px;
  background: #8c8c8c;
  border-radius: 5px;
}
.arrow-left {
  width: 0;
  height: 0;
  border: 4px solid transparent;
  border-left: 0;
  border-right: 5px solid #8c8c8c;
}
.arrow-right {
  width: 0;
  height: 0;
  margin-left: 15px;
  border: 4px solid transparent;
  border-right: 0;
  border-left: 5px solid #8c8c8c;
}

/* edge side panel */
.edge-bar {
  display: flex;
  flex-direction: column;
  flex: 1;
  padding: 2px 0;
}
.edge-item {
  display: flex;
  align-items: center;
  justify-content: center;
  height: 40px;
}
.edge-item svg {
  width: 22px;
  height: 22px;
}
.edge-item.line svg {
  width: 18px;
  height: 18px;
  fill: none;
  stroke: #222;
  stroke-width: 1.200;
}
.edge-rule {
  width: 29px;
  margin: 11px auto 12px;
  border: 0;
  border-top: 1px solid #c8c8c8;
}
.edge-rule.tight {
  margin: 0 auto 2px;
}
.edge-bottom {
  margin-top: auto;
}
.taskbar {
  height: 2px;
  background: #202020;
}
.task-active {
  display: block;
  width: 36px;
  height: 2px;
  margin-left: 668px;
  background: #444;
}
```
